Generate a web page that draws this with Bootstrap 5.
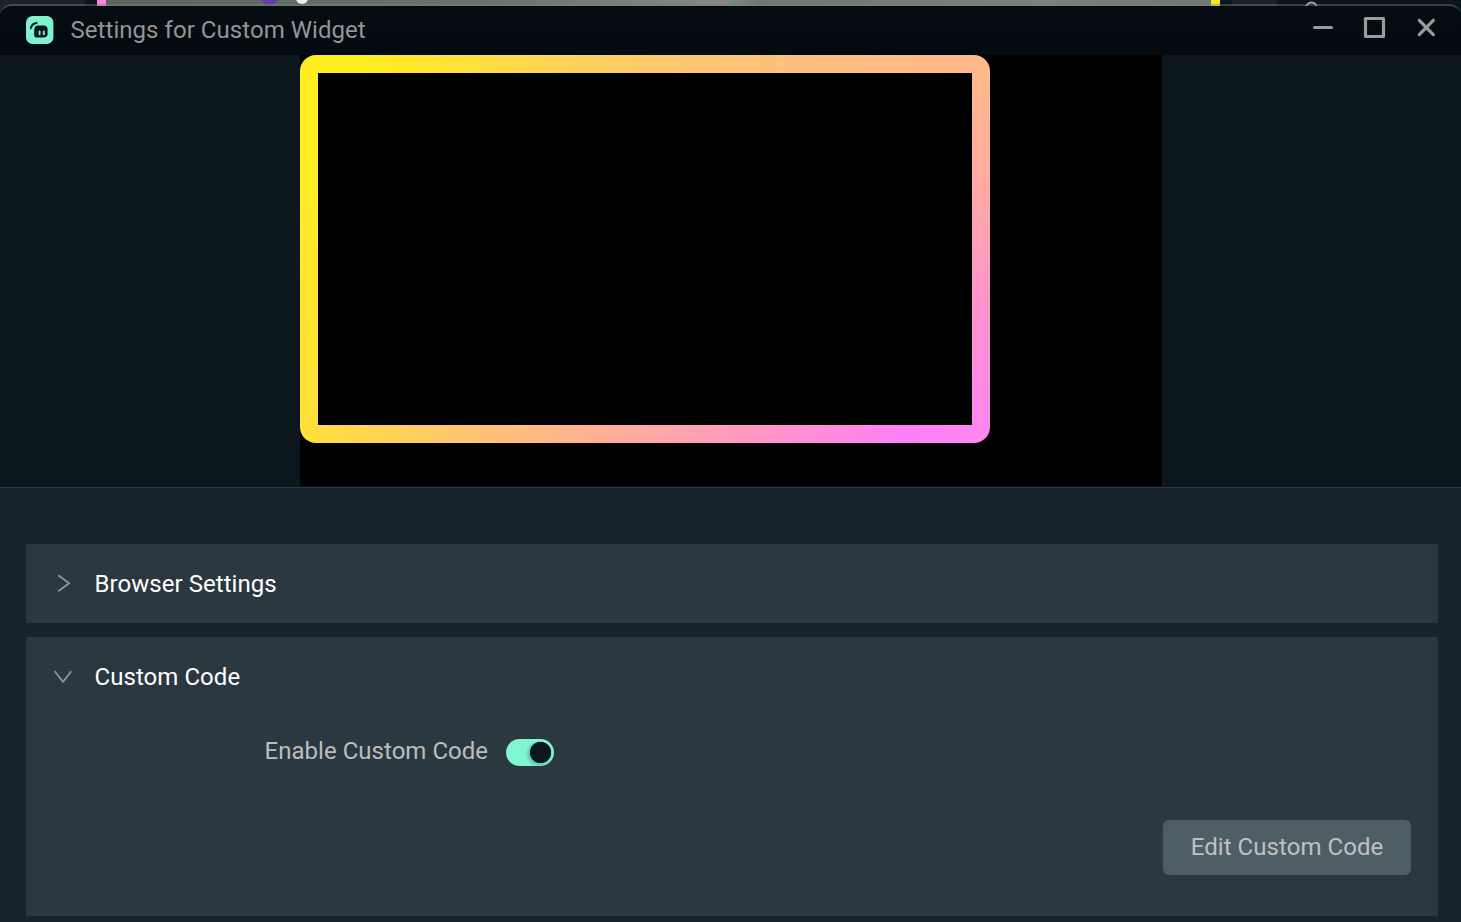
<!DOCTYPE html>
<html lang="en">
<head>
<meta charset="utf-8">
<meta name="viewport" content="width=device-width, initial-scale=1">
<title>Settings for Custom Widget</title>
<link href="https://cdn.jsdelivr.net/npm/bootstrap@5.3.0/dist/css/bootstrap.min.css" rel="stylesheet">
<style>
  body { height: 922px; background: #17242d; font-family: Roboto, "Liberation Sans", sans-serif; font-size: 24px; line-height: 32px; color: #bdbdbd; }
  .backdrop { height: 18px; margin-bottom: -14px; background: #0a161d; }
  .bd-panel { width: 85px; background: #17242d; }
  .bd-gap { width: 12px; }
  .bd-pink { width: 9px; background: #f986dd; }
  .bd-scene { width: 1105px; background: linear-gradient(90deg, #56675a, #6a746b 35%, #858a86 56%, #6b7976 59%, #76837f 85%, #6f7775); }
  .bd-yellow { width: 9px; background: #f6e626; }
  .bd-tab { width: 45px; margin-left: 12px; background: #17242d; }
  .app-window { height: 918px; border-top: 2px solid rgba(125,125,125,.42); border-radius: 12px 12px 0 0; background: #17242d; background-clip: padding-box; }
  .titlebar { height: 49px; padding: 0 24px 2px 26px; background: linear-gradient(#060d12, #040b10); color: #939596; }
  .window-title { margin-left: 16.5px; letter-spacing: .05px; }
  .preview { height: 433px; background: #0c171d; border-bottom: 1px solid #2b383f; }
  .stage { width: 862px; height: 431px; margin-left: 300px; background: #000; }
  .frame {
    width: 690px; height: 388px; padding: 18px; border-radius: 16px;
    background:
      linear-gradient(100deg, #ffee20 10%, #ffd358 38%, #ffc474 58%, #ffb98a 96%) top / 100% 18px no-repeat,
      linear-gradient(100deg, #ffdf3c 2%, #ffc76c 22%, #ffb095 43%, #ff99c0 64%, #ff80f8 88%, #ff88f0) bottom / 100% 18px no-repeat,
      linear-gradient(175deg, #ffee20 20%, #ffdf3c 100%) left / 18px 100% no-repeat,
      linear-gradient(175deg, #ffb98a 5%, #ffa8a8 37%, #ff94cc 63%, #ff86ee 95%) right / 18px 100% no-repeat;
  }
  .screen { background: #000; }
  .content { padding: 56px 23px 0 26px; }
  .section { background: #2c3840; }
  .section + .section { margin-top: 14px; height: 279px; }
  .section-head { height: 79px; padding-left: 26px; color: #fff; letter-spacing: .05px; }
  .section-head svg { margin-right: 20.5px; }
  .setting { margin: 19px 0 0 238.5px; letter-spacing: .03px; }
  .setting .form-check-input { width: 48px; height: 27px; margin: 3px 0 0 18px; border: 0; background: radial-gradient(circle at 34.5px 13.5px, #09161d 10.3px, transparent 11px), radial-gradient(circle at 33px 15px, rgba(50,135,120,.35) 10px, transparent 14px), #80f5d2; box-shadow: none; }
  .btn-edit { width: 248px; height: 55px; margin: 53px 27px 0 0; padding: 0 0 2px; border: 0; border-radius: 6px; background: #4f5e65 !important; color: #bdc1c3 !important; font-size: 24px; letter-spacing: .06px; }
</style>
</head>
<body class="overflow-hidden">
  <div class="backdrop d-flex position-relative overflow-hidden">
    <div class="bd-panel"></div><div class="bd-gap"></div><div class="bd-pink"></div><div class="bd-scene"></div><div class="bd-yellow"></div><div class="bd-tab"></div>
    <svg class="position-absolute top-0 start-0" width="1461" height="18"><path d="M261 0h18l-4 3-6 2-6-2z" fill="#633fa6"/><circle cx="302" cy="-2" r="6" fill="#eee"/><path d="M731.5 0v6" stroke="#28b893"/><circle cx="1311.5" cy="8" r="5.5" fill="none" stroke="#a4a9aa" stroke-width="2"/></svg>
  </div>
  <main class="app-window position-relative overflow-hidden">
    <header class="titlebar d-flex align-items-center">
      <svg width="28" height="28" viewBox="0 0 28 28">
        <rect width="27.4" height="28" rx="6.5" fill="#7ff3d0"/>
        <path d="M4.9 12.2C5.4 9.4 7.5 7.4 10.5 7" fill="none" stroke="#09161d" stroke-width="1.9" stroke-linecap="round"/>
        <path d="M8.2 14q0-4.4 4.4-4.4h5q4 0 4 4v4.1q0 3.800-4 3.800h-7.400q-2 0-2-2z" fill="#09161d"/>
        <path d="M13.6 15.4v2.8M17.8 15.4v2.8" stroke="#7ff3d0" stroke-width="1.9" stroke-linecap="round"/>
      </svg>
      <span class="window-title">Settings for Custom Widget</span>
      <svg class="ms-auto" width="126" height="30" fill="none" stroke="#999c9d" style="margin-top:-5px">
        <path d="M3.5 15.5h17" stroke-width="3" stroke-linecap="round"/>
        <rect x="54.5" y="6.5" width="18" height="18" stroke-width="3.2" stroke-linejoin="round"/>
        <path d="M108.3 8.300l14 14.300M122.300 8.300l-14 14.300" stroke-width="3.200" stroke-linecap="round"/>
      </svg>
    </header>
    <section class="preview">
      <div class="stage"><div class="frame"><div class="screen w-100 h-100"></div></div></div>
    </section>
    <div class="content">
      <section class="section">
        <div class="section-head d-flex align-items-center">
          <svg width="22" height="22" fill="none" stroke="#92999c" stroke-width="1.7"><path d="M6.3 2.3L17.2 10.3 6.3 18.3"/></svg>Browser Settings
        </div>
      </section>
      <section class="section">
        <div class="section-head d-flex align-items-center">
          <svg width="22" height="22" fill="none" stroke="#92999c" stroke-width="1.7"><path d="M2.7 5.2L11 15.8 19.3 5.2"/></svg>Custom Code
        </div>
        <div class="setting form-switch d-flex align-items-center p-0">
          <label for="enable">Enable Custom Code</label>
          <input id="enable" class="form-check-input" type="checkbox" role="switch" checked>
        </div>
        <div class="d-flex justify-content-end"><button class="btn btn-edit" type="button">Edit Custom Code</button></div>
      </section>
    </div>
  </main>
<script src="https://cdn.jsdelivr.net/npm/bootstrap@5.3.0/dist/js/bootstrap.bundle.min.js"></script>
</body>
</html>
